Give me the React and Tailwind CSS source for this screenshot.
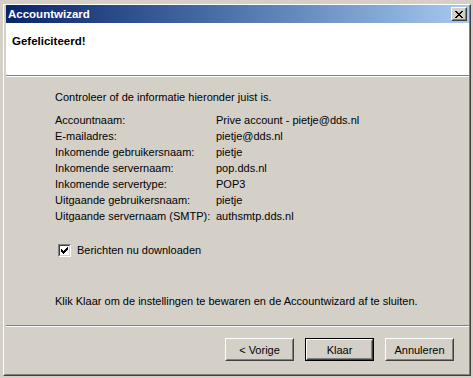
import React from "react";

const rows = [
  ["Accountnaam:", "Prive account - pietje@dds.nl"],
  ["E-mailadres:", "pietje@dds.nl"],
  ["Inkomende gebruikersnaam:", "pietje"],
  ["Inkomende servernaam:", "pop.dds.nl"],
  ["Inkomende servertype:", "POP3"],
  ["Uitgaande gebruikersnaam:", "pietje"],
  ["Uitgaande servernaam (SMTP):", "authsmtp.dds.nl"],
];

function PixelGlyph({ pattern, className }) {
  const rects = [];
  pattern.forEach((row, y) => {
    row.split("").forEach((c, x) => {
      if (c === "X") rects.push(<rect key={x + "-" + y} x={x} y={y} width="1" height="1" />);
    });
  });
  return (
    <svg
      className={className}
      width={pattern[0].length}
      height={pattern.length}
      viewBox={`0 0 ${pattern[0].length} ${pattern.length}`}
      shapeRendering="crispEdges"
      fill="#000"
    >
      {rects}
    </svg>
  );
}

const closeX = [
  "XX....XX",
  ".XX..XX.",
  "..XXXX..",
  "...XX...",
  "..XXXX..",
  ".XX..XX.",
  "XX....XX",
];

const check = [
  "......X",
  ".....XX",
  "X...XXX",
  "XX.XXX.",
  "XXXXX..",
  ".XXX...",
  "..X....",
];

function Raised({ children, className = "" }) {
  return (
    <div
      className={
        "border border-t-white border-l-white border-r-[#404040] border-b-[#404040] bg-[#d4d0c8] " +
        className
      }
    >
      <div className="w-full h-full border border-t-[#d4d0c8] border-l-[#d4d0c8] border-r-[#808080] border-b-[#808080] flex items-center justify-center">
        {children}
      </div>
    </div>
  );
}

function Button({ children, isDefault }) {
  if (isDefault) {
    return (
      <div className="w-[69px] h-[23px] border border-black">
        <Raised className="w-full h-full">{children}</Raised>
      </div>
    );
  }
  return <Raised className="w-[69px] h-[23px]">{children}</Raised>;
}

export default function App() {
  return (
    <div
      className="w-[473px] h-[378px] bg-[#d4d0c8] overflow-hidden text-[11px] leading-[16px] text-black"
      style={{ fontFamily: '"Liberation Sans", Arial, sans-serif' }}
    >
      <div className="ml-[3px] mt-[4px] w-[468px] h-[372px] border border-t-white border-l-white border-r-[#404040] border-b-[#404040]">
        <div className="w-full h-full border border-t-[#d4d0c8] border-l-[#d4d0c8] border-r-[#808080] border-b-[#808080] border-t-0 pl-[1px] flex flex-col">
          {/* Title bar */}
          <div className="h-[18px] shrink-0 flex items-center justify-between bg-gradient-to-r from-[#0a246a] to-[#a6caf0] pl-[2px] pr-[2px]">
            <span className="font-bold text-white text-[11.5px] leading-[18px]">Accountwizard</span>
            <Raised className="w-[16px] h-[14px]">
              <PixelGlyph pattern={closeX} className="block" />
            </Raised>
          </div>
          {/* Header */}
          <div className="h-[52px] shrink-0 bg-white pt-[12px] pl-[6px]">
            <div className="font-bold text-[11.5px] leading-[13px]">Gefeliciteerd!</div>
          </div>
          <div className="h-[2px] shrink-0 border-t border-t-[#808080] border-b border-b-white" />
          {/* Body */}
          <div className="flex-1 flex flex-col">
            <div className="pl-[49px] pt-[12px]">
              <div>Controleer of de informatie hieronder juist is.</div>
              <div className="mt-[7px] flex flex-col">
                {rows.map(([k, v]) => (
                  <div key={k} className="flex h-[16px]">
                    <div className="w-[161px] shrink-0">{k}</div>
                    <div>{v}</div>
                  </div>
                ))}
              </div>
              <div className="mt-[18px] flex items-center h-[16px]">
                <div className="ml-[3px] w-[13px] h-[13px] border border-t-[#808080] border-l-[#808080] border-r-white border-b-white">
                  <div className="w-full h-full border border-t-[#404040] border-l-[#404040] border-r-[#d4d0c8] border-b-[#d4d0c8] bg-white flex items-center justify-center">
                    <PixelGlyph pattern={check} className="block" />
                  </div>
                </div>
                <span className="ml-[6px]">Berichten nu downloaden</span>
              </div>
              <div className="mt-[35px]">
                Klik Klaar om de instellingen te bewaren en de Accountwizard af te sluiten.
              </div>
            </div>
            <div className="mt-[16px] h-[2px] border-t border-t-[#808080] border-b border-b-white" />
            <div className="mt-[11px] flex justify-end gap-[11px] pr-[15px]">
              <Button>&lt; Vorige</Button>
              <Button isDefault>Klaar</Button>
              <Button>Annuleren</Button>
            </div>
          </div>
        </div>
      </div>
    </div>
  );
}
